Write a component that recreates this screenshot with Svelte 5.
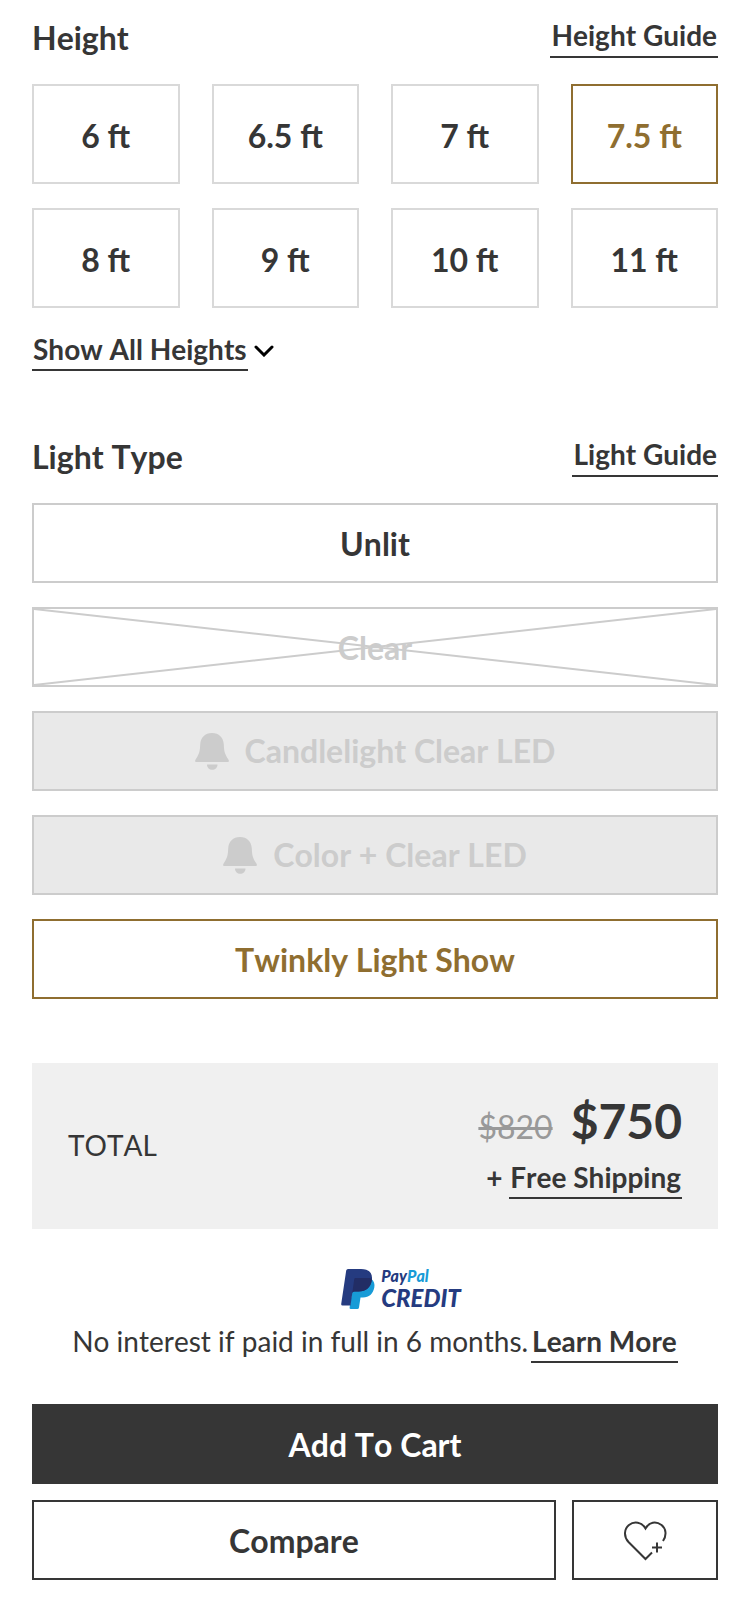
<script lang="ts">
	type LightStatus = "available" | "unavailable" | "notify";

	interface LightOption {
		name: string;
		status: LightStatus;
	}

	const heights = ["6 ft", "6.5 ft", "7 ft", "7.5 ft", "8 ft", "9 ft", "10 ft", "11 ft"];

	const lights: LightOption[] = [
		{ name: "Unlit", status: "available" },
		{ name: "Clear", status: "unavailable" },
		{ name: "Candlelight Clear LED", status: "notify" },
		{ name: "Color + Clear LED", status: "notify" },
		{ name: "Twinkly Light Show", status: "available" }
	];

	let selectedHeight = $state("7.5 ft");
	let selectedLight = $state("Twinkly Light Show");

	function selectLight(light: LightOption) {
		if (light.status !== "available") return;
		selectedLight = light.name;
	}
</script>

<main class="product-options">
	<section aria-labelledby="height-title">
		<div class="section-header">
			<h2 id="height-title">Height</h2>
			<a class="link" href="#height-guide">Height Guide</a>
		</div>
		<div class="height-grid">
			{#each heights as height (height)}
				<button
					class="option height-option"
					class:selected={selectedHeight === height}
					aria-pressed={selectedHeight === height}
					onclick={() => (selectedHeight = height)}
				>
					{height}
				</button>
			{/each}
		</div>
		<button class="show-all">
			<span class="link">Show All Heights</span>
			<svg width="20" height="12" viewBox="0 0 20 12" aria-hidden="true">
				<path d="M2 2l8 8 8-8" fill="none" stroke="#000" stroke-width="3" stroke-linecap="round" />
			</svg>
		</button>
	</section>

	<section class="light-section" aria-labelledby="light-title">
		<div class="section-header">
			<h2 id="light-title">Light Type</h2>
			<a class="link" href="#light-guide">Light Guide</a>
		</div>
		<div class="light-list">
			{#each lights as light (light.name)}
				<button
					class="option light-option {light.status}"
					class:selected={selectedLight === light.name}
					aria-pressed={selectedLight === light.name}
					disabled={light.status === "unavailable"}
					onclick={() => selectLight(light)}
				>
					{#if light.status === "notify"}
						<svg width="34" height="37" viewBox="0 0 34 37" fill="currentColor" aria-hidden="true">
							<path d="M17 0C10 0 5.600 4.600 5.200 11.500C4.900 18 4.600 20.500 0.600 26.500C-0.200 27.800 0 29 1.400 29H32.600C34 29 34.200 27.800 33.400 26.500C29.400 20.500 29.100 18 28.800 11.500C28.400 4.600 24 0 17 0Z" />
							<path d="M12 31.500H22.500C22.500 34.800 20 36.800 17.200 36.800S12 34.800 12 31.500Z" />
						</svg>
					{/if}
					{light.name}
					{#if light.status === "unavailable"}
						<svg class="cross" viewBox="0 0 100 100" preserveAspectRatio="none" aria-hidden="true">
							<path d="M0 0L100 100M0 100L100 0" vector-effect="non-scaling-stroke" />
						</svg>
					{/if}
				</button>
			{/each}
		</div>
	</section>

	<section class="total">
		<span>TOTAL</span>
		<div class="total-values">
			<div class="prices">
				<s>$820</s>
				<strong>$750</strong>
			</div>
			<div class="shipping">+ <a class="link" href="#shipping">Free Shipping</a></div>
		</div>
	</section>

	<section class="financing">
		<div class="paypal">
			<svg width="34" height="40" viewBox="0 0 34 40" aria-hidden="true">
				<path fill="#179bd7" d="M30.500 10C33 12 34 15 33.300 18.500C32 25 28 28.500 22 28.500H19.500L18 38.500Q17.800 40 16.300 40H10Q8.300 40 8.600 38.500L13 10Z" />
				<path fill="#253b80" d="M7 0H20C28 0 32 4 30.800 11.500C29.600 18.500 25 22.500 17.500 22.500H13.500Q11.600 22.500 11.300 24L9.500 36.500H1.500Q0 36.500 0.200 35L5.200 1.500Q5.500 0 7 0Z" />
				<path fill="#222d65" d="M14.500 9H28Q29.700 9 30.900 10C30 18.300 25.500 22.500 17.500 22.500H13.500Q12 22.500 11.300 23.800L13.200 10.300Q13.400 9 14.500 9Z" />
			</svg>
			<div class="paypal-text">
				<span class="paypal-name">Pay<span>Pal</span></span>
				<span class="paypal-credit">CREDIT</span>
			</div>
		</div>
		<p>
			<span>No interest if paid in full in 6 months.</span>
			<a class="link" href="#financing">Learn More</a>
		</p>
	</section>

	<div class="actions">
		<button class="action add-to-cart">Add To Cart</button>
		<button class="action">Compare</button>
		<button class="action" aria-label="Add to favorites">
			<svg width="44" height="40" viewBox="0 0 44 40" fill="none" stroke="currentColor" stroke-width="2" aria-hidden="true">
				<path d="M40 20C44 14 43 7.500 38.500 4C33 0 26 1 22.500 7.500C19 1 11 0 6 4C1 8 0.500 15.500 5.500 21L22.500 38L29 31.500" />
				<path d="M34 21.500v10M29 26.500h10" />
			</svg>
		</button>
	</div>
</main>

<style>
	:global(body) {
		margin: 0;
		background: #fff;
	}

	.product-options {
		padding: 17px 32px 30px;
		font-family: Lato, "Liberation Sans", sans-serif;
		font-size: 28px;
		line-height: 36px;
		font-kerning: none;
		color: #363636;
	}

	button {
		font: inherit;
		font-kerning: inherit;
		color: inherit;
		cursor: pointer;
	}

	.section-header {
		display: flex;
		justify-content: space-between;
		align-items: flex-start;
		margin-bottom: 26px;
	}

	h2 {
		margin: 0;
		font-size: 32px;
		line-height: 41px;
		font-weight: 700;
	}

	.link {
		display: inline-block;
		padding: 0 1px 2px;
		border-bottom: 2px solid #363636;
		font-weight: 700;
		color: #363636;
		text-decoration: none;
	}

	.section-header .link {
		padding-bottom: 3px;
	}

	.option,
	.action {
		display: flex;
		align-items: center;
		justify-content: center;
		box-sizing: border-box;
		padding: 2px 0 0;
		height: 80px;
		border: 2px solid #ccc;
		background: #fff;
		font-size: 32px;
		line-height: 40px;
		font-weight: 700;
	}

	.height-grid {
		display: grid;
		grid-template-columns: repeat(4, 1fr);
		gap: 24px 32px;
	}

	.height-option {
		height: 100px;
		padding-top: 4px;
		border-color: #d9d9d9;
	}

	.option.selected {
		border-color: #8f6e30;
		color: #8f6e30;
	}

	.show-all {
		display: flex;
		align-items: center;
		gap: 6px;
		margin-top: 23px;
		padding: 0;
		border: none;
		background: none;
	}

	.light-section {
		margin-top: 65px;
	}

	.light-list {
		display: flex;
		flex-direction: column;
		gap: 24px;
	}

	.light-option {
		position: relative;
		gap: 16px;
		width: 100%;
	}

	.light-option.unavailable {
		color: #ccc;
		cursor: default;
	}

	.light-option.notify {
		padding-top: 0;
		background: #e9e9e9;
		color: #ccc;
	}

	.cross {
		position: absolute;
		inset: 0;
		width: 100%;
		height: 100%;
		fill: none;
		stroke: #ccc;
		stroke-width: 2px;
	}

	.total {
		display: flex;
		align-items: center;
		justify-content: space-between;
		margin-top: 64px;
		padding: 28px 36px 30px;
		background: #f0f0f0;
	}

	.total-values {
		text-align: right;
	}

	.prices {
		display: flex;
		align-items: baseline;
		justify-content: flex-end;
		gap: 18px;
		line-height: 60px;
	}

	.prices s {
		font-size: 32px;
		color: #999;
		font-weight: 400;
	}

	.prices strong {
		font-size: 48px;
		font-weight: 700;
	}

	.shipping {
		margin-top: 2px;
		font-weight: 700;
	}

	.financing {
		display: flex;
		flex-direction: column;
		align-items: center;
		margin-top: 38px;
	}

	.financing p {
		display: flex;
		gap: 3px;
		margin: 13px 0 0;
	}

	.paypal {
		display: flex;
		align-items: center;
		gap: 6px;
		margin-left: 52px;
	}

	.paypal-text {
		display: flex;
		flex-direction: column;
		font-style: italic;
		font-weight: 900;
		color: #253b80;
	}

	.paypal-name {
		font-size: 16px;
		line-height: 18px;
	}

	.paypal-name span {
		color: #179bd7;
	}

	.paypal-credit {
		font-size: 24px;
		line-height: 25px;
	}

	.actions {
		display: grid;
		grid-template-columns: 1fr 146px;
		gap: 16px;
		margin-top: 41px;
	}

	.action {
		border-color: #363636;
	}

	.add-to-cart {
		grid-column: 1 / -1;
		background: #363636;
		color: #fff;
	}
</style>
